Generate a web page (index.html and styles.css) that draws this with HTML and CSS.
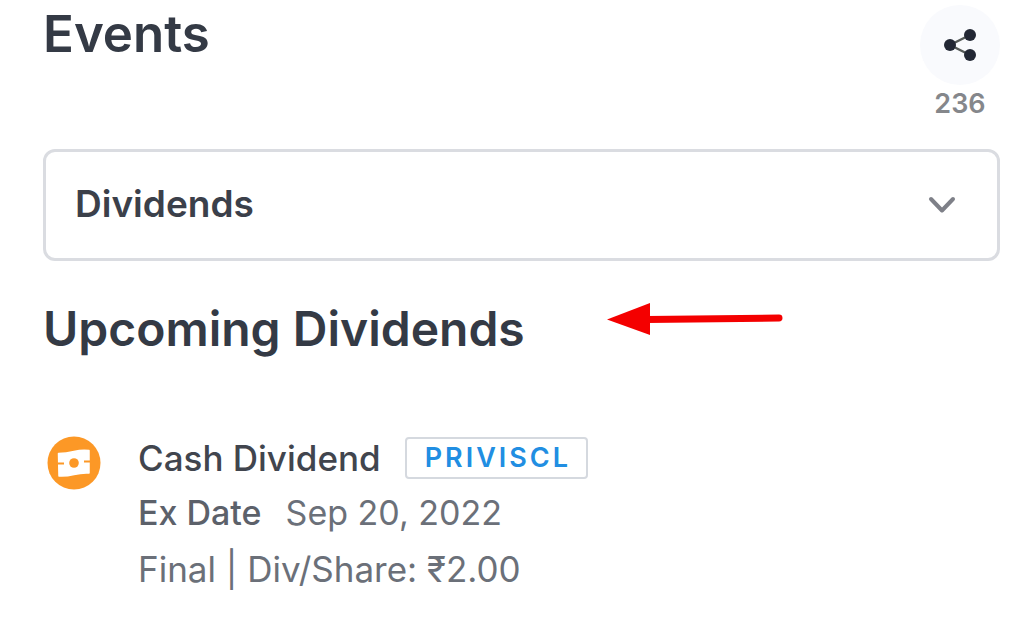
FILE: index.html
```html
<!DOCTYPE html>
<html lang="en">
<head>
<meta charset="utf-8">
<meta name="viewport" content="width=device-width, initial-scale=1">
<title>Events</title>
<link rel="stylesheet" href="styles.css">
</head>
<body>
<main class="page">
  <header class="header">
    <h1 class="title">Events</h1>
    <div class="share">
      <button class="share-button" type="button" aria-label="Share">
        <svg class="share-icon" viewBox="0 0 34 34" aria-hidden="true">
          <path d="M27 7 7 17l20 10" fill="none" stroke="#555a58" stroke-width="2.4"/>
          <g fill="#222734"><circle cx="27" cy="7" r="6"/><circle cx="7" cy="17" r="6"/><circle cx="27" cy="27" r="6"/></g>
        </svg>
      </button>
      <span class="share-count">236</span>
    </div>
  </header>

  <div class="picker">
    <select class="picker-select" aria-label="Event type">
      <option>Dividends</option>
    </select>
    <svg class="picker-chevron" viewBox="0 0 28 18" aria-hidden="true">
      <path d="M3 3l11 11.500L25 3" fill="none" stroke="#7e8088" stroke-width="4" stroke-linecap="round" stroke-linejoin="round"/>
    </svg>
  </div>

  <div class="section-head">
    <h2 class="section-title">Upcoming Dividends</h2>
    <svg class="arrow" viewBox="0 0 176 34" aria-hidden="true">
      <path d="M40 17.500 172 16" stroke="#f40000" stroke-width="7" stroke-linecap="round"/>
      <path d="M0 17.500 43 1v32z" fill="#f40000"/>
    </svg>
  </div>

  <article class="event">
    <svg class="event-icon" viewBox="0 0 54 54" aria-hidden="true">
      <circle cx="27" cy="27" r="26.500" fill="#fc9826"/>
      <path d="M11.500 17.500Q19 17.500 27 15.500T42 14.500V37Q35 36.500 27 38.500T12 40Z" fill="#fff" stroke="#fff" stroke-width="1.500" stroke-linejoin="round"/>
      <circle cx="27" cy="27" r="4.800" fill="#fc9826"/>
      <path d="M11 27.500h6M37 25.500h6" stroke="#fc9826" stroke-width="1.800"/>
    </svg>
    <div class="event-body">
      <div class="event-line">
        <h3 class="event-name">Cash Dividend</h3>
        <a class="ticker" href="#">PRIVISCL</a>
      </div>
      <p class="event-date"><strong class="date-label">Ex Date</strong><span>Sep 20, 2022</span></p>
      <p class="event-detail">Final | Div/Share: ₹2.00</p>
    </div>
  </article>
</main>
</body>
</html>
```
FILE: styles.css
```css
* {
  box-sizing: border-box;
}

body {
  margin: 0;
  background: #fff;
  color: #343a45;
  font-family: Inter, "Noto Sans", sans-serif;
}

h1, h2, h3, p {
  margin: 0;
}

.page {
  padding: 5px 24px 24px 43px;
}

.header {
  display: flex;
  justify-content: space-between;
  align-items: flex-start;
}

.title {
  font-size: 51px;
  line-height: 58px;
  font-weight: 600;
}

.share {
  display: flex;
  flex-direction: column;
  align-items: center;
  width: 80px;
}

.share-button {
  display: grid;
  place-items: center;
  width: 80px;
  height: 80px;
  padding: 0;
  border: 0;
  border-radius: 50%;
  background: #f9fafd;
}

.share-icon {
  width: 34px;
  height: 34px;
}

.share-count {
  color: #85878b;
  font-size: 27px;
  line-height: 38px;
  font-weight: 600;
}

.picker {
  position: relative;
  margin-top: 26px;
}

.picker-select {
  display: block;
  appearance: none;
  width: 100%;
  height: 112px;
  padding: 0 80px 4px 29px;
  border: 3px solid #dadce1;
  border-radius: 12px;
  background: #fff;
  color: #3b404a;
  font-family: inherit;
  font-size: 37px;
  font-weight: 600;
}

.picker-chevron {
  position: absolute;
  right: 44px;
  top: 47px;
  width: 28px;
  height: 18px;
  pointer-events: none;
}

.section-head {
  display: flex;
  align-items: flex-start;
  gap: 82px;
  margin-top: 38px;
}

.section-title {
  font-size: 48px;
  line-height: 60px;
  font-weight: 600;
}

.arrow {
  width: 176px;
  height: 34px;
  margin-top: 3px;
}

.event {
  display: flex;
  gap: 37px;
  margin: 73px 0 0 4px;
}

.event-icon {
  flex: none;
  width: 54px;
  height: 54px;
  margin-top: 4px;
}

.event-line {
  display: flex;
  align-items: center;
  gap: 24px;
  height: 52px;
}

.event-name {
  color: #41454e;
  font-size: 35px;
  font-weight: 500;
}

.ticker {
  padding: 0 15px 0 18px;
  border: 2px solid #d5d9df;
  border-radius: 4px;
  color: #218ee2;
  font-size: 27px;
  line-height: 38px;
  font-weight: 600;
  letter-spacing: 3px;
  text-decoration: none;
}

.event-date,
.event-detail {
  color: #6b7079;
  font-size: 35px;
  line-height: 57px;
}

.event-date {
  display: flex;
  gap: 24px;
  font-size: 34px;
}

.date-label {
  color: #5c616a;
  font-weight: 500;
}
```
